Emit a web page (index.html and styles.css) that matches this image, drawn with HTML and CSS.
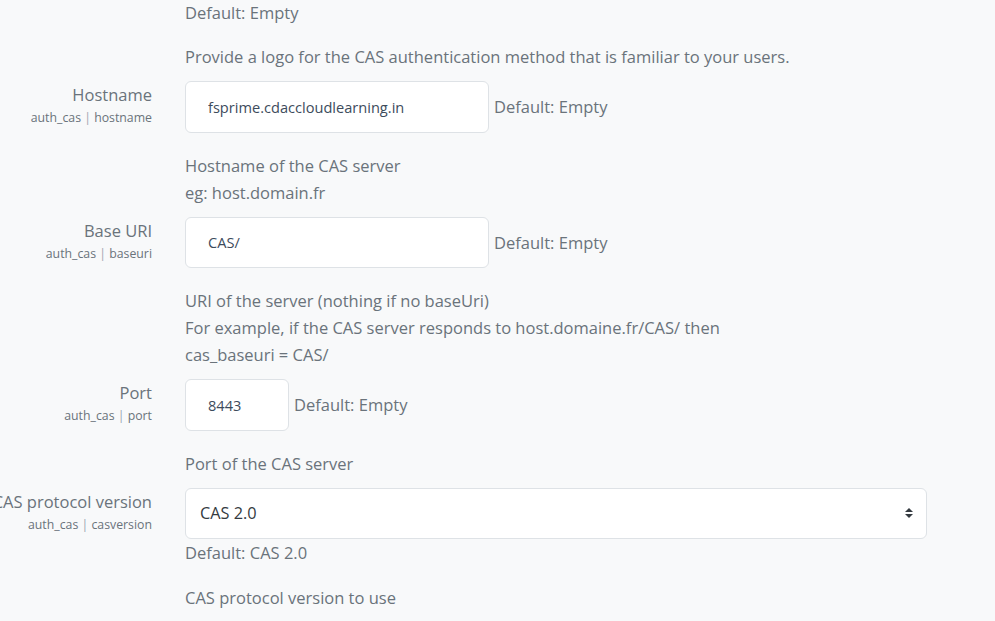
FILE: index.html
```html
<!DOCTYPE html>
<html lang="en">
<head>
<meta charset="utf-8">
<title>CAS settings</title>
<link rel="stylesheet" href="styles.css">
</head>
<body>
<div class="page">
  <div class="setting setting-top">
    <div class="label-col"></div>
    <div class="field-col">
      <div class="defaultinfo">Default: Empty</div>
      <div class="description desc-top">Provide a logo for the CAS authentication method that is familiar to your users.</div>
    </div>
  </div>

  <div class="setting">
    <div class="label-col">
      <div class="label">Hostname</div>
      <div class="setname">auth_cas <span class="pipe">|</span> hostname</div>
    </div>
    <div class="field-col">
      <div class="field-row">
        <input class="text-input wide" type="text" value="fsprime.cdaccloudlearning.in">
        <span class="default-inline">Default: Empty</span>
      </div>
      <div class="description">Hostname of the CAS server<br>eg: host.domain.fr</div>
    </div>
  </div>

  <div class="setting">
    <div class="label-col">
      <div class="label">Base URI</div>
      <div class="setname">auth_cas <span class="pipe">|</span> baseuri</div>
    </div>
    <div class="field-col">
      <div class="field-row">
        <input class="text-input wide" type="text" value="CAS/">
        <span class="default-inline">Default: Empty</span>
      </div>
      <div class="description">URI of the server (nothing if no baseUri)<br>For example, if the CAS server responds to host.domaine.fr/CAS/ then<br>cas_baseuri = CAS/</div>
    </div>
  </div>

  <div class="setting">
    <div class="label-col">
      <div class="label">Port</div>
      <div class="setname">auth_cas <span class="pipe">|</span> port</div>
    </div>
    <div class="field-col">
      <div class="field-row">
        <input class="text-input short" type="text" value="8443">
        <span class="default-inline">Default: Empty</span>
      </div>
      <div class="description">Port of the CAS server</div>
    </div>
  </div>

  <div class="setting">
    <div class="label-col">
      <div class="label label-nowrap">CAS protocol version</div>
      <div class="setname">auth_cas <span class="pipe">|</span> casversion</div>
    </div>
    <div class="field-col">
      <div class="select-box">
        <span class="select-value">CAS 2.0</span>
        <svg class="select-arrow" width="8" height="10" viewBox="0 0 4 5" aria-hidden="true"><path d="M2 0L0 2h4zm0 5L0 3h4z" fill="#343a40"/></svg>
      </div>
      <div class="defaultinfo">Default: CAS 2.0</div>
      <div class="description desc-select">CAS protocol version to use</div>
    </div>
  </div>
</div>
</body>
</html>
```

FILE: styles.css
```css
html, body {
  margin: 0;
  padding: 0;
}

body {
  background: #f8f9fa;
  font-family: "Open Sans", "Liberation Sans", sans-serif;
  font-size: 16.5px;
  line-height: 27px;
  color: #6a737b;
  overflow: hidden;
}

.page {
  display: flex;
  flex-direction: column;
  gap: 11px;
  margin-top: -1px;
}

.setting {
  display: grid;
  grid-template-columns: 152px 741px;
  column-gap: 33px;
}

.label-col {
  text-align: right;
  white-space: nowrap;
}

.label {
  line-height: 27px;
}

.label-nowrap {
  direction: rtl;
}

.setname {
  margin-top: 1px;
  font-size: 12.3px;
  line-height: 17px;
  color: #6a737b;
}

.pipe {
  color: #98a4b0;
}

.field-row {
  display: flex;
  align-items: center;
}

.text-input {
  box-sizing: border-box;
  height: 51.5px;
  border: 1px solid #dee2e6;
  border-radius: 6px;
  background: #fff;
  font-family: "Open Sans", "Liberation Sans", sans-serif;
  font-size: 14.6px;
  color: #3d4b5c;
  padding: 0 0 0 22px;
  margin: 0;
  outline: none;
}

.wide {
  width: 304px;
}

.short {
  width: 104px;
}

.default-inline {
  margin-left: 5px;
}

.description {
  margin-top: 19px;
}

.desc-top {
  margin-top: 17px;
}

.desc-select {
  margin-top: 17.5px;
}

.select-box {
  box-sizing: border-box;
  height: 51.5px;
  width: 742px;
  border: 1px solid #dee2e6;
  border-radius: 6px;
  background: #fff;
  display: flex;
  align-items: center;
  justify-content: space-between;
  padding: 0 13px 0 14px;
  color: #343a40;
  font-size: 16.3px;
}

.select-arrow {
  display: block;
}
```
